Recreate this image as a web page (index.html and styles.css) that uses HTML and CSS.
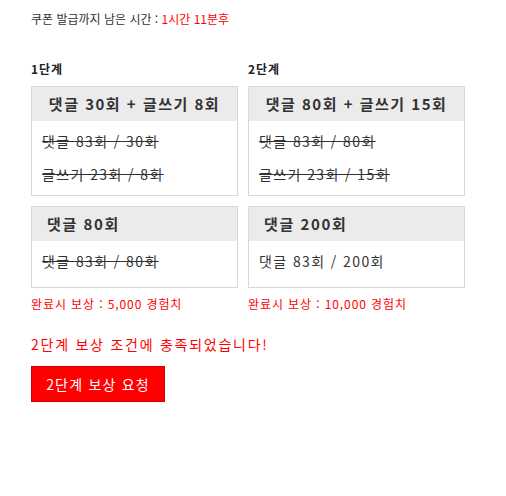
FILE: index.html
```html
<!DOCTYPE html>
<html lang="ko">
<head>
<meta charset="utf-8">
<link rel="stylesheet" href="styles.css">
</head>
<body>
<div class="page">
  <p class="timer">쿠폰 발급까지 남은 시간 : <span class="red">1시간 11분후</span></p>
  <div class="stages">
    <div class="stage stage-1">
      <h3 class="stage-title">1단계</h3>
      <div class="card">
        <div class="card-head center">댓글 30회 + 글쓰기 8회</div>
        <div class="card-body">
          <div class="row done">댓글 83회 / 30회</div>
          <div class="row done">글쓰기 23회 / 8회</div>
        </div>
      </div>
      <div class="card last">
        <div class="card-head">댓글 80회</div>
        <div class="card-body">
          <div class="row done">댓글 83회 / 80회</div>
        </div>
      </div>
      <p class="reward">완료시 보상 : 5,000 경험치</p>
    </div>
    <div class="stage stage-2">
      <h3 class="stage-title">2단계</h3>
      <div class="card">
        <div class="card-head center">댓글 80회 + 글쓰기 15회</div>
        <div class="card-body">
          <div class="row done">댓글 83회 / 80회</div>
          <div class="row done">글쓰기 23회 / 15회</div>
        </div>
      </div>
      <div class="card last">
        <div class="card-head">댓글 200회</div>
        <div class="card-body">
          <div class="row">댓글 83회 / 200회</div>
        </div>
      </div>
      <p class="reward">완료시 보상 : 10,000 경험치</p>
    </div>
  </div>
  <p class="message">2단계 보상 조건에 충족되었습니다!</p>
  <button class="claim">2단계 보상 요청</button>
</div>
</body>
</html>
```

FILE: styles.css
```css
html, body {
  margin: 0;
  padding: 0;
  background: #fff;
}
body {
  font-family: "Noto Sans CJK KR", "Noto Sans", sans-serif;
  color: #333;
}
.page {
  padding: 10px 31px;
}
.timer {
  margin: 0;
  font-size: 12px;
  line-height: 18px;
  color: #333;
}
.red {
  color: #f00;
}
.stages {
  display: grid;
  grid-template-columns: 207px 217px;
  column-gap: 10px;
  margin-top: 33px;
}
.stage-title {
  margin: 0 0 9px;
  font-size: 12px;
  line-height: 16px;
  font-weight: bold;
  color: #222;
  letter-spacing: 1px;
}
.card {
  border: 1px solid #d8d8d8;
  margin-bottom: 10px;
}
.card.last {
  margin-bottom: 8px;
}
.card-head {
  background: #ebebeb;
  height: 34px;
  line-height: 34px;
  font-size: 15px;
  font-weight: bold;
  padding: 0 15px;
  color: #333;
  letter-spacing: 1.6px;
}
.card-head.center {
  text-align: center;
  padding: 0;
  letter-spacing: 1.5px;
}
.card-body {
  box-sizing: border-box;
  min-height: 46px;
  padding: 4px 10px 4px;
}
.row {
  height: 33px;
  line-height: 33px;
  font-size: 14px;
  letter-spacing: 1.4px;
  color: #333;
}
.row.done {
  text-decoration: line-through;
}
.reward {
  margin: 0;
  font-size: 12px;
  line-height: 16px;
  color: #f00;
  letter-spacing: 0.9px;
}
.message {
  margin: 22px 0 0;
  font-size: 14px;
  line-height: 20px;
  color: #f00;
  letter-spacing: 1.75px;
}
.claim {
  display: block;
  margin-top: 12px;
  width: 134px;
  height: 36px;
  background: #f00;
  border: 1px solid #c00;
  color: #fff;
  font-family: "Noto Sans CJK KR", sans-serif;
  font-size: 14px;
  letter-spacing: 1.2px;
  padding: 0;
  cursor: pointer;
}
```
